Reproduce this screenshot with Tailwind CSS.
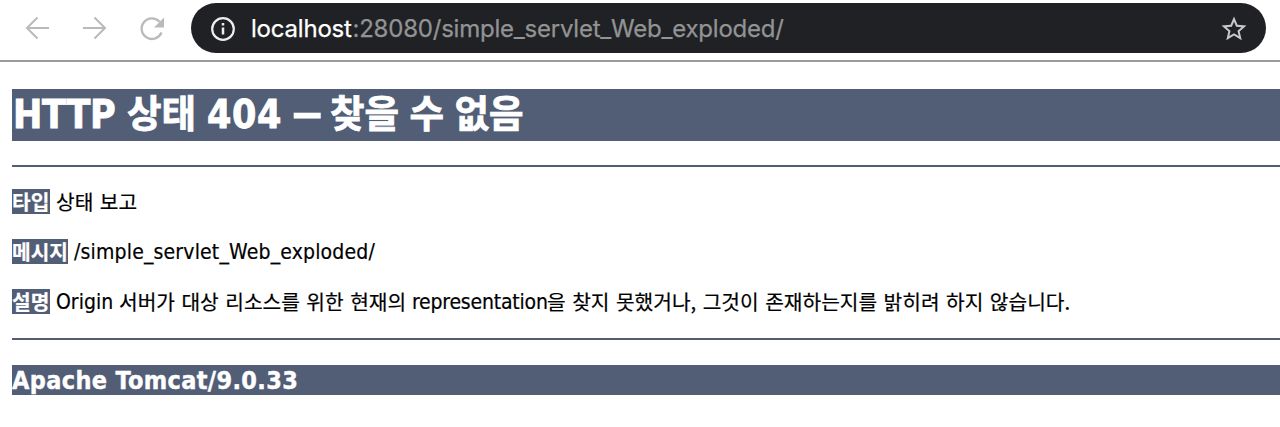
<!DOCTYPE html>
<html lang="ko">
<head>
<meta charset="utf-8">
<title>HTTP 상태 404 – 찾을 수 없음</title>
<script src="https://cdn.jsdelivr.net/npm/@tailwindcss/browser@4"></script>
</head>
<body class="h-[427px] overflow-hidden bg-white text-black">
<header class="flex h-[62px] items-start border-b-2 border-[#9b9b9b] pt-[3px]">
  <div class="flex h-[50px] w-[191px] shrink-0 items-center text-[#b9babc]">
    <svg class="ml-[24px] size-[26px]" viewBox="0 0 26 26" fill="none" stroke="currentColor" stroke-width="2"><path d="M25 13H3M13.5 2.5L3 13l10.500 10.500"/></svg>
    <svg class="ml-[32px] size-[26px]" viewBox="0 0 26 26" fill="none" stroke="currentColor" stroke-width="2"><path d="M1 13h22M12.500 2.500L23 13L12.500 23.500"/></svg>
    <svg class="mt-px ml-[31px] size-[26px]" viewBox="0 0 26 26" fill="none" stroke="currentColor" stroke-width="2.300"><path d="M22.500 16.500A10.300 10.300 0 1 1 20.500 5.700"/><path d="M25 1.500v10h-10z" fill="currentColor" stroke="none"/></svg>
  </div>
  <div class="flex h-[50px] w-[1075px] items-center rounded-full bg-[#202124] font-['Inter',sans-serif] text-[24px] text-[#929394]">
    <svg class="mt-px ml-[20px] size-[24px] shrink-0 text-[#ededed]" viewBox="0 0 24 24" fill="none" stroke="currentColor" stroke-width="2.200"><circle cx="12" cy="12" r="10.800"/><path d="M12 10.500v7M12 6v2.500" stroke-width="2.500"/></svg>
    <p class="mt-[2px] ml-[16px] flex whitespace-nowrap leading-[30px] [-webkit-text-stroke:0.25px]"><span class="w-[101.500px] tracking-[-0.200px] text-white">localhost</span><span class="tracking-[-0.220px]">:28080/simple_servlet_Web_exploded/</span></p>
    <svg class="mt-px mr-[17.500px] ml-auto size-[30px] shrink-0 text-[#c8c8c8]" viewBox="0 0 24 24" fill="currentColor"><path d="M22 9.240l-7.190-.620L12 2 9.190 8.630 2 9.240l5.460 4.730L5.820 21 12 17.270 18.180 21l-1.630-7.030L22 9.240zM12 15.400l-3.760 2.270 1-4.280-3.320-2.880 4.380-.380L12 6.100l1.710 4.040 4.380.380-3.320 2.880 1 4.280L12 15.400z"/></svg>
  </div>
</header>
<main class="ml-[12px] flex flex-col whitespace-nowrap pt-[27px] font-['DejaVu_Sans_Condensed','DejaVu_Sans','Noto_Sans_CJK_KR',sans-serif] font-stretch-condensed">
  <h1 class="flex h-[52px] bg-[#525d76] text-[39px] leading-[51px] font-bold text-white [-webkit-text-stroke:0.8px]">
    <span class="w-[115px] pl-px tracking-[-0.400px]">HTTP</span><span class="w-[80px] font-['Noto_Sans_CJK_KR',sans-serif] text-[37.500px] leading-[44px]">상태</span><span class="w-[84px] tracking-[0.600px]">404</span><span class="w-[39px]"><span class="inline-block origin-left -translate-y-[2.500px] scale-x-[1.850]">–</span></span><span class="font-['Noto_Sans_CJK_KR',sans-serif] text-[37.500px] leading-[44px]">찾을 수 없음</span>
  </h1>
  <hr class="mt-[24px] h-[2px] border-0 bg-[#525d76]">
  <div class="mt-[22px] flex flex-col gap-[25px] text-[21px] leading-[27px] [-webkit-text-stroke:0.2px]">
    <p class="flex h-[25px]"><b class="mr-[6px] w-[38px] bg-[#525d76] font-['Noto_Sans_CJK_KR',sans-serif] text-[20.300px] leading-[25px] text-white">타입</b><span class="font-['Noto_Sans_CJK_KR',sans-serif] text-[20.300px] leading-[25px] [word-spacing:0.8px]">상태 보고</span></p>
    <p class="flex h-[25px]"><b class="mr-[6px] w-[56px] bg-[#525d76] font-['Noto_Sans_CJK_KR',sans-serif] text-[20.300px] leading-[25px] text-white">메시지</b><span class="tracking-[0.170px]">/simple_servlet_Web_exploded/</span></p>
    <p class="flex h-[25px]"><b class="mr-[6px] w-[38px] bg-[#525d76] font-['Noto_Sans_CJK_KR',sans-serif] text-[20.300px] leading-[25px] text-white">설명</b><span class="w-[63px]">Origin</span><span class="w-[293px] font-['Noto_Sans_CJK_KR',sans-serif] text-[20.300px] leading-[25px] [word-spacing:0.8px]">서버가 대상 리소스를 위한 현재의</span><span class="w-[135px] tracking-[-0.200px]">representation</span><span class="font-['Noto_Sans_CJK_KR',sans-serif] text-[20.300px] leading-[25px] [word-spacing:0.8px]">을 찾지 못했거나, 그것이 존재하는지를 밝히려 하지 않습니다.</span></p>
  </div>
  <hr class="mt-[24px] h-[2px] border-0 bg-[#525d76]">
  <h3 class="mt-[25px] h-[30px] bg-[#525d76] text-[25px] leading-[32px] font-bold tracking-[0.350px] text-white [-webkit-text-stroke:0.4px]">Apache Tomcat/9.0.33</h3>
</main>
</body>
</html>
